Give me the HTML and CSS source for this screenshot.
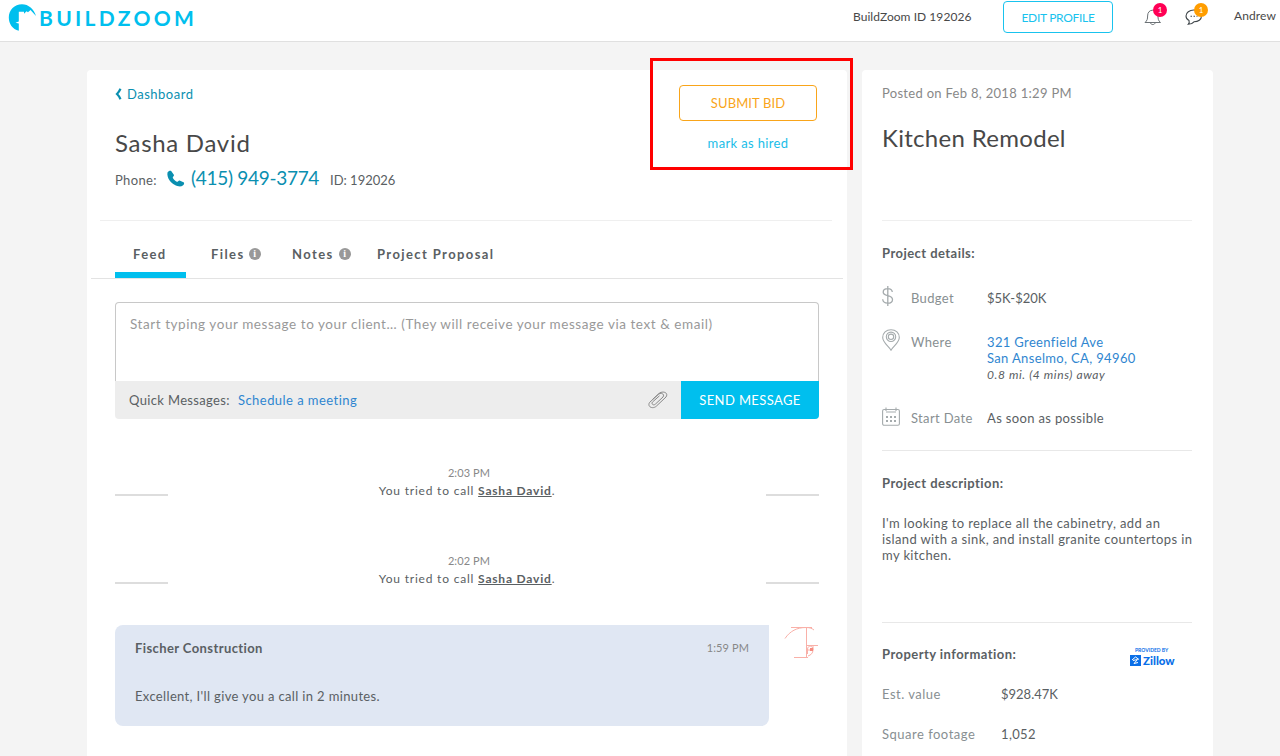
FILE: index.html
```html
<!DOCTYPE html>
<html lang="en">
<head>
  <meta charset="UTF-8">
  <meta name="viewport" content="width=device-width, initial-scale=1.0">
  <title>Sasha David - BuildZoom</title>
  <link rel="stylesheet" href="styles.css">
</head>
<body>
  <header class="header">
    <a class="logo" href="#">
      <svg width="29" height="28" viewBox="0 0 29 28">
        <path fill="#00bfee" d="M10.800 26.800C4.500 25 0.800 20 0.800 13.500C0.800 6 6.500 0.200 14 0.200C20.500 0.200 26 5 28 12L22.500 6L20 8.300L18.500 7.300L16 9.800V7.800H10.800V17.500L7.500 18.800L10.800 19.500Z"/>
      </svg>
      <span>BUILDZOOM</span>
    </a>
    <nav class="header-nav">
      <span class="account-id">BuildZoom ID 192026</span>
      <a class="btn-edit" href="#">EDIT PROFILE</a>
      <a class="notify bell" href="#">
        <svg width="18" height="18" viewBox="0 0 18 18" fill="none" stroke="#6c7276" stroke-width="1">
          <path d="M1 14.500H16.500C14.300 12.600 14 11 14 8C14 4.300 12 2.200 8.800 2.200S3.600 4.300 3.600 8C3.600 11 3.200 12.600 1 14.500ZM6.500 14.700C6.800 17.200 10.800 17.200 11.100 14.700"/>
        </svg>
        <span class="badge badge-red">1</span>
      </a>
      <a class="notify chat" href="#">
        <svg width="18" height="18" viewBox="0 0 18 18" fill="none" stroke="#3f464a" stroke-width="1.100">
          <path d="M4 12.500C2 11.500 1 10 1 8C1 4.500 4.500 2 8.800 2S16.500 4.500 16.500 8S13.200 13.800 9 13.800C7.500 15.500 5.500 16.300 3.200 16.300C4.300 15.200 4.500 13.900 4 12.500Z"/>
          <path stroke-dasharray="1.500 1.500" d="M5.500 8.200H12.500"/>
        </svg>
        <span class="badge badge-orange">1</span>
      </a>
      <span class="user-name">Andrew</span>
    </nav>
  </header>

  <div class="page">
    <main class="card main">
      <section class="client">
        <div class="client-info">
          <a class="back-link" href="#">
            <svg width="7" height="12" viewBox="0 0 7 12" fill="none" stroke="#0a8fb0" stroke-width="2.200"><path d="M5.500 0.800C4.600 2.800 3.600 4.500 2 6C3.600 7.500 4.600 9.200 5.500 11.200"/></svg>
            <span>Dashboard</span>
          </a>
          <h1>Sasha David</h1>
          <div class="phone-row">
            <span class="phone-label">Phone:</span>
            <svg width="18" height="17" viewBox="0 0 18 17"><path fill="#0a8fb0" d="M0.500 2.500C1.500 0.800 3.300 0.300 4.200 1L7 5C7.200 6 5.500 6.800 5.800 7.800C6.500 9.500 8.200 11 9.800 11.800C10.800 12.100 11.500 10.300 12.600 10.500L17 12.600C17.500 14 16.500 15.800 14.500 16.300C10.500 17 5.700 14.500 2.800 10.800C0.800 8.200 0 5 0.500 2.500Z"/></svg>
            <a class="phone" href="#">(415) 949-3774</a>
            <span class="client-id">ID: 192026</span>
          </div>
        </div>
        <div class="bid">
          <a class="btn-bid" href="#">SUBMIT BID</a>
          <a class="mark-hired" href="#">mark as hired</a>
          <div class="highlight"></div>
        </div>
      </section>

      <nav class="tabs">
        <a class="tab active" href="#">Feed</a>
        <a class="tab tab-files" href="#">Files <i class="info">i</i></a>
        <a class="tab tab-notes" href="#">Notes <i class="info">i</i></a>
        <a class="tab tab-proposal" href="#">Project Proposal</a>
      </nav>

      <form class="composer">
        <div class="message-input">Start typing your message to your client… (They will receive your message via text &amp; email)</div>
        <div class="composer-bar">
          <span class="quick-label">Quick Messages:</span>
          <a class="quick-link" href="#">Schedule a meeting</a>
          <svg class="clip" width="20" height="18" viewBox="0 0 20 18" fill="none" stroke="#888" stroke-width="1">
            <path d="M4.500 8.500L11 2.500C14.500 -0.500 21 1.500 18 6L8.500 15C5 18.500 -1 16 1.500 11.500L10.500 3.200C13.500 1 17 3.500 15 6L7.500 13C5.500 15 3 13 4.500 11L11.500 4.800"/>
          </svg>
          <button type="button" class="btn-send">SEND MESSAGE</button>
        </div>
      </form>

      <div class="event">
        <span class="event-line"></span>
        <div class="event-text">
          <div class="time">2:03 PM</div>
          <div>You tried to call <a href="#">Sasha David</a>.</div>
        </div>
        <span class="event-line"></span>
      </div>
      <div class="event">
        <span class="event-line"></span>
        <div class="event-text">
          <div class="time">2:02 PM</div>
          <div>You tried to call <a href="#">Sasha David</a>.</div>
        </div>
        <span class="event-line"></span>
      </div>

      <div class="message-row">
        <div class="bubble">
          <div class="bubble-head">
            <strong>Fischer Construction</strong>
            <span class="time">1:59 PM</span>
          </div>
          <p>Excellent, I'll give you a call in 2 minutes.</p>
        </div>
        <svg class="avatar" width="34" height="33" viewBox="0 0 34 33" fill="none" stroke="#f9b0a8" stroke-width="1">
          <path d="M1 13.500C6 6 13 2.500 22 2.500C26 2.500 28 3.500 30 5M7 2.500H28M22.500 2V32M10 32.500H24M22 20.500H34M23.500 29V24C24 20 29 20 29 25C29 28 27 30 24 31M24 25H29V20"/>
          <path fill="#f58b80" stroke="none" d="M26 23h3v3h-3z"/>
        </svg>
      </div>
    </main>

    <aside class="card side">
      <section class="side-head">
        <div class="posted">Posted on Feb 8, 2018 1:29 PM</div>
        <h2>Kitchen Remodel</h2>
      </section>

      <section class="details">
        <h3>Project details:</h3>
        <div class="detail budget">
          <svg width="18" height="20" viewBox="0 0 18 20" fill="none" stroke="#a5abad" stroke-width="1.300"><path d="M10.300 6C10 3.700 8.500 2.700 5.800 2.700C3 2.700 1.200 4 1.200 6.200C1.200 11 10.500 8 10.500 13.400C10.500 15.800 8.700 17.200 5.700 17.200C2.800 17.200 0.900 15.800 0.700 13.300M5.800 0V20"/></svg>
          <span class="detail-label">Budget</span>
          <span class="price">$5K-$20K</span>
        </div>
        <div class="detail where">
          <svg width="18" height="22" viewBox="0 0 18 22" fill="none" stroke="#a5abad" stroke-width="1.100"><path d="M9 21.200C6.500 17 0.700 13.500 0.700 8.500C0.700 4 4.200 0.700 9 0.700S17.300 4 17.300 8.500C17.300 13.500 11.500 17 9 21.200Z"/><circle cx="9" cy="7.800" r="4.700"/><circle cx="9" cy="7.800" r="2.700"/></svg>
          <span class="detail-label">Where</span>
          <div><a href="#">321 Greenfield Ave<br>San Anselmo, CA, 94960</a><br><em>0.8 mi. (4 mins) away</em></div>
        </div>
        <div class="detail start">
          <svg width="18" height="19" viewBox="0 0 18 19" fill="none" stroke="#a5abad" stroke-width="1.100"><rect x="0.600" y="2.500" width="16.800" height="15.800" rx="1.500"/><path d="M4 0.500V4M14 0.500V4M4 5H14"/><path stroke-width="2" stroke-dasharray="2 2" d="M4 10H14M4 14H14"/></svg>
          <span class="detail-label">Start Date</span>
          <span>As soon as possible</span>
        </div>
      </section>

      <section class="description">
        <h3>Project description:</h3>
        <p>I'm looking to replace all the cabinetry, add an<br>island with a sink, and install granite countertops in<br>my kitchen.</p>
      </section>

      <section class="property">
        <div class="property-head">
          <h3>Property information:</h3>
          <div class="zillow">
            <small>PROVIDED BY</small>
            <div class="zillow-name">
              <svg width="11" height="11" viewBox="0 0 11 11"><path fill="#0a6fe8" d="M0 0h11v11H0z"/><path fill="none" stroke="#fff" d="M2 5L5.500 2L9 4.500M3 5.500L7.500 4.500L4 8.500L8 7.500"/></svg>
              <span>Zillow</span>
            </div>
          </div>
        </div>
        <div class="fact"><span>Est. value</span><b class="price">$928.47K</b></div>
        <div class="fact"><span>Square footage</span><b>1,052</b></div>
      </section>
    </aside>
  </div>
</body>
</html>
```

FILE: styles.css
```css
* {
  box-sizing: border-box;
}
body {
  margin: 0;
  height: 756px;
  overflow: hidden;
  background: #f4f4f4;
  color: #5a6063;
  font-family: Lato, "Liberation Sans", sans-serif;
  font-size: 13px;
  line-height: 16px;
  letter-spacing: 0.35px;
}
a {
  color: #2f86d0;
  text-decoration: none;
}
h1, h2, h3, p {
  margin: 0;
}
.header {
  display: flex;
  justify-content: space-between;
  height: 42px;
  padding-left: 8px;
  background: white;
  border-bottom: 1px solid #e0e0e0;
}
.logo {
  display: flex;
  align-items: flex-start;
  padding-top: 4px;
  color: #00bfee;
}
.logo span {
  margin-left: 2px;
  font-size: 21px;
  font-weight: bold;
  line-height: 27px;
  letter-spacing: 3.3px;
}
.header-nav {
  display: flex;
  align-items: flex-start;
  font-size: 12px;
  color: #484848;
}
.account-id {
  width: 150px;
  margin-top: 9px;
  letter-spacing: 0.05px;
}
.btn-edit {
  width: 110px;
  height: 32px;
  margin-top: 1px;
  border: 1px solid #19c3ee;
  border-radius: 4px;
  color: #19c3ee;
  line-height: 32px;
  text-align: center;
  letter-spacing: -0.3px;
}
.notify {
  position: relative;
  height: 18px;
  margin-top: 8px;
}
.bell {
  margin-left: 31px;
}
.chat {
  margin-left: 23px;
}
.badge {
  position: absolute;
  top: -5px;
  left: 9px;
  width: 14px;
  height: 14px;
  border-radius: 50%;
  color: white;
  font-size: 8px;
  line-height: 14px;
  text-align: center;
  letter-spacing: 0;
}
.badge-red {
  background: #ff0055;
}
.badge-orange {
  background: #ff9d00;
}
.user-name {
  width: 46px;
  margin-top: 8px;
  margin-left: 31px;
  letter-spacing: 0.1px;
}
.page {
  display: flex;
  align-items: flex-start;
  gap: 15px;
  padding: 28px 0 0 87px;
}
.card {
  height: 700px;
  background: white;
  border-radius: 4px 4px 0 0;
}
.main {
  width: 760px;
}
.client {
  display: flex;
  justify-content: space-between;
  height: 151px;
  margin: 0 15px 0 13px;
  padding: 15px 15px 0;
  border-bottom: 1px solid #efefef;
}
.back-link {
  display: flex;
  align-items: center;
  gap: 5px;
  height: 18px;
  color: #0a8fb0;
  letter-spacing: 0.5px;
}
h1 {
  margin-top: 25px;
  color: #484848;
  font-size: 24px;
  font-weight: normal;
  line-height: 30px;
  letter-spacing: 0.7px;
}
.phone-row {
  display: flex;
  align-items: center;
  height: 24px;
  margin-top: 8px;
}
.phone-label {
  width: 52px;
  padding-top: 3px;
}
.phone {
  width: 139px;
  margin-left: 6px;
  color: #0a8fb0;
  font-size: 19px;
  letter-spacing: -0.3px;
  white-space: nowrap;
}
.client-id {
  padding-top: 3px;
  letter-spacing: 0;
}
.bid {
  position: relative;
  width: 138px;
  text-align: center;
}
.btn-bid {
  display: block;
  height: 36px;
  border: 1px solid #f9a51a;
  border-radius: 4px;
  color: #f9a51a;
  line-height: 34px;
  letter-spacing: 0.1px;
}
.mark-hired {
  display: block;
  margin-top: 14px;
  color: #19bde8;
}
.highlight {
  position: absolute;
  top: -27px;
  left: -29px;
  width: 203px;
  height: 112px;
  border: 3px solid #ff0000;
}
.tabs {
  display: flex;
  height: 58px;
  margin: 0 4px;
  padding-left: 24px;
  border-bottom: 1px solid #e3e3e3;
}
.tab {
  display: flex;
  gap: 5px;
  height: 57px;
  padding-top: 25px;
  color: #5a6063;
  font-weight: bold;
  letter-spacing: 1.4px;
}
.tab.active {
  width: 71px;
  padding-left: 18px;
  border-bottom: 6px solid #00bfee;
}
.tab-files {
  width: 81px;
  margin-left: 25px;
}
.tab-notes {
  width: 85px;
}
.tab .info {
  width: 12px;
  height: 12px;
  margin-top: 2px;
  border-radius: 50%;
  background: #999;
  color: white;
  font: bold 10px/12px "Liberation Serif", serif;
  text-align: center;
  letter-spacing: 0;
}
.tab-files .info {
  margin-left: -1px;
}
.composer {
  margin: 23px 28px 0;
}
.message-input {
  height: 79px;
  padding: 13px 14px;
  border: 1px solid #c8c8c8;
  border-bottom: none;
  border-radius: 4px 4px 0 0;
  color: #999;
  font-size: 13.5px;
  letter-spacing: 0.56px;
  white-space: nowrap;
}
.composer-bar {
  display: flex;
  align-items: center;
  height: 38px;
  padding-left: 14px;
  background: #ededed;
  border-radius: 0 0 4px 4px;
  overflow: hidden;
}
.quick-label {
  width: 109px;
}
.quick-link {
  letter-spacing: 0.45px;
}
.clip {
  margin-left: auto;
}
.btn-send {
  width: 138px;
  height: 38px;
  margin-left: 13px;
  padding: 0;
  border: none;
  background: #00bfee;
  color: white;
  font: inherit;
  letter-spacing: 0.4px;
}
.event {
  display: flex;
  justify-content: space-between;
  align-items: flex-end;
  height: 36px;
  margin: 45px 28px 0;
  font-size: 12px;
}
.event + .event {
  margin-top: 52px;
}
.event-line {
  width: 53px;
  height: 2px;
  margin-bottom: 4px;
  background: #ddd;
}
.event-text {
  height: 36px;
  text-align: center;
  line-height: 18px;
  letter-spacing: 0.8px;
}
.event-text a {
  color: #5a6063;
  font-weight: bold;
  text-decoration: underline;
}
.time {
  color: #888;
  font-size: 11px;
  font-weight: normal;
  letter-spacing: 0.1px;
}
.event-text .time {
  padding-left: 4px;
}
.message-row {
  display: flex;
  gap: 15px;
  margin: 37px 28px 0;
}
.bubble {
  width: 654px;
  height: 101px;
  padding: 15px 20px;
  border-radius: 8px 0 8px 8px;
  background: #e0e7f3;
}
.bubble-head {
  display: flex;
  justify-content: space-between;
}
.bubble-head strong {
  letter-spacing: 0.4px;
}
.bubble p {
  margin-top: 32px;
}
.side {
  width: 351px;
  padding: 0 21px 0 20px;
}
.side section {
  border-bottom: 1px solid #e8e8e8;
}
.side .side-head {
  height: 151px;
  padding-top: 15px;
  border-color: #efefef;
}
.posted {
  color: #888;
  letter-spacing: 0.3px;
}
h2 {
  margin-top: 22px;
  color: #484848;
  font-size: 24px;
  font-weight: normal;
  line-height: 30px;
  letter-spacing: 0.3px;
}
h3 {
  font-size: 13px;
  letter-spacing: 0.45px;
}
.details {
  height: 230px;
  padding-top: 24px;
}
.detail {
  display: flex;
  align-items: flex-start;
}
.detail svg {
  flex: none;
}
.detail-label {
  width: 76px;
  margin-left: 11px;
  color: #888f92;
}
.price {
  letter-spacing: 0;
}
.budget {
  height: 43px;
  margin-top: 25px;
}
.budget span {
  margin-top: 4px;
}
.where {
  height: 78px;
}
.where div,
.where .detail-label {
  margin-top: 5px;
}
.where em {
  font-size: 12px;
  letter-spacing: 0.6px;
}
.start span {
  margin-top: 3px;
}
.description {
  height: 172px;
  padding-top: 24px;
}
.description p {
  margin-top: 24px;
  letter-spacing: 0.38px;
  white-space: nowrap;
}
.side .property {
  border-bottom: none;
}
.property-head {
  display: flex;
  justify-content: space-between;
  padding-top: 23px;
}
.zillow {
  width: 62px;
  color: #0a6fe8;
  letter-spacing: 0;
}
.zillow small {
  display: block;
  padding-left: 5px;
  font-size: 5px;
  font-weight: bold;
  line-height: 9px;
}
.zillow-name {
  display: flex;
  gap: 2px;
  font-size: 11.5px;
  font-weight: 900;
  line-height: 11px;
}
.fact {
  display: flex;
  height: 40px;
}
.property-head + .fact {
  margin-top: 20px;
}
.fact span {
  width: 119px;
  color: #888f92;
  letter-spacing: 0.5px;
}
.fact b {
  font-weight: normal;
}
```
